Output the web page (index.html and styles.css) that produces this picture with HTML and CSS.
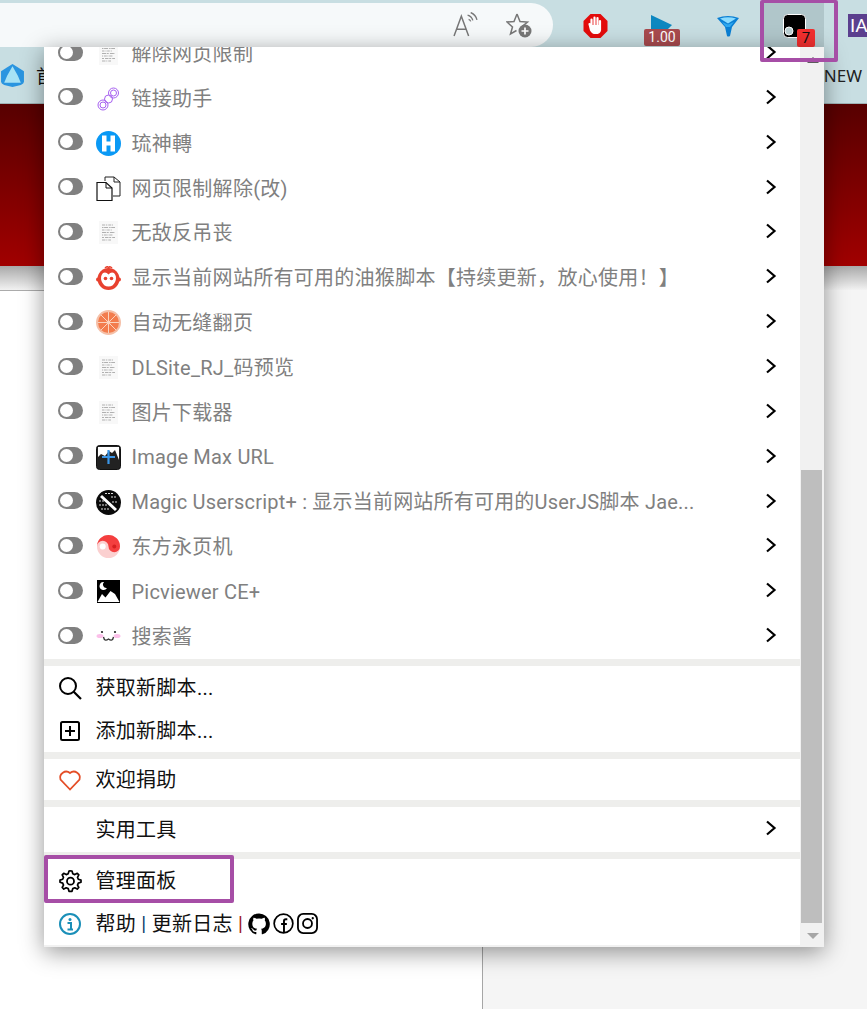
FILE: index.html
```html
<!DOCTYPE html>
<html lang="zh-CN">
<head>
<meta charset="utf-8">
<title>Tampermonkey menu</title>
<link rel="stylesheet" href="styles.css">
</head>
<body>
<svg class="defs" width="0" height="0" aria-hidden="true">
  <defs>
    <symbol id="chev" viewBox="0 0 12 16"><path d="M2 1.500 L9.500 8 L2 14.500" fill="none" stroke="#000" stroke-width="2.200"/></symbol>
    <symbol id="doc" viewBox="0 0 25 25">
      <rect x="3" y="1" width="19" height="23" fill="#f8f8f8"/>
      <g stroke="#b0b0b0" stroke-width="1.200" fill="none">
        <path d="M6 5h11" stroke-dasharray="3 .8 1.500 1"/>
        <path d="M6 7.500h13" stroke-dasharray="1.500 .6 4 1"/>
        <path d="M6 10h10" stroke-dasharray="2.500 1 1 .7"/>
        <path d="M6 12.500h13" stroke-dasharray="4 .7 2 1.200"/>
        <path d="M6 15h11" stroke-dasharray="1 .8 3 .6"/>
        <path d="M6 17.500h13" stroke-dasharray="2 1 3.500 .7"/>
        <path d="M6 20h9" stroke-dasharray="3.500 .8 1 1"/>
      </g>
    </symbol>
  </defs>
</svg>
<div class="page">
  <header class="toolbar">
    <div class="address">
      <svg class="tool-read" viewBox="0 0 24 24" width="25" height="25"><path d="M1 23 L8 4 L15 23 M3.500 16.500 H12.500" fill="none" stroke="#777" stroke-width="1.400"/><path d="M14 3 a7 7 0 0 1 5 5 M15 7 a3 3 0 0 1 2 2 M17 0.500 a10 10 0 0 1 6 7" fill="none" stroke="#777" stroke-width="1.300"/></svg>
      <svg class="tool-star" viewBox="0 0 26 26" width="26" height="26"><path d="M11 2 L14 9.500 L21.500 10 L15.500 15 L16.500 20 M11 2 L8 9.500 L1 10 L6.500 15 L4.500 22 L10.500 18.500" fill="none" stroke="#777" stroke-width="1.500"/><circle cx="19" cy="19" r="6.500" fill="#777"/><path d="M15.500 19 H22.500 M19 15.500 V22.500" stroke="#fff" stroke-width="1.700"/></svg>
    </div>
    <div class="exts">
      <div class="ext ext-stop">
        <svg viewBox="0 0 24 26" width="25" height="26"><path d="M7 1 H17 L24 8 V18 L17 25 H7 L0 18 V8 Z" fill="#e30b0b"/><path d="M7.500 17 L6 11 M8 14 V6.500 M11 13 V4.500 M14 13 V5 M16.500 14 V8 M7.500 13 H16.500 V17 Q16 20 12 20 Q9 20 7.500 17Z" stroke="#fff" stroke-width="2.200" fill="#fff" stroke-linecap="round"/></svg>
      </div>
      <div class="ext ext-speed">
        <svg viewBox="0 0 22 14" width="22" height="14"><path d="M0 0 L21 10 L17 14 H0 Z" fill="#0c87c0"/></svg>
        <span class="speed-badge">1.00</span>
      </div>
      <div class="ext ext-funnel">
        <svg viewBox="0 0 22 22" width="22" height="22"><path d="M0 3 Q11 -1 22 3 L15 12 L13 21 Q11 22 10 21 L8 12 Z" fill="#0a7fd4"/><path d="M3 3.500 Q11 1 19 3.500 L11 8.500 Z" fill="#8bdcff"/><path d="M5 7 L11 9.500 L17 7 L13 12 H9 Z" fill="#2ea8f0"/></svg>
      </div>
      <div class="ext ext-tm">
        <svg viewBox="0 0 24 24" width="24" height="24"><rect x=".5" y=".5" width="22" height="23" rx="4" fill="#000" stroke="#fff"/><circle cx="6" cy="17" r="4" fill="#bcd1d4" stroke="#fff" stroke-width="1"/></svg>
        <span class="tm-badge">7</span>
      </div>
      <div class="ext-ia">IA</div>
    </div>
  </header>
  <nav class="bookmarks">
    <svg viewBox="0 0 24 24" width="25" height="25"><path d="M12 1 L17 4 L23 8 V18 Q23 20 20 21 L12 23 L4 21 Q1 20 1 18 V8 L7 4 Z" fill="#2a95e0"/><path d="M12 3 L17 12 L20 19 H4 L7 12 Z" fill="#a6e2f5"/></svg>
    <span class="bm-first">首</span>
    <span class="bm-new">NEW</span>
  </nav>
  <div class="hero"></div>
  <div class="fade"></div>
  <main class="content">
    <div class="col-left"></div>
    <div class="col-right"></div>
  </main>

  <aside class="menu">
    <div class="menu-body">
      <div class="scripts">
        <ul class="script-list">
          <li class="script"><span class="toggle"></span><svg class="ico"><use href="#doc"/></svg><span class="name">解除网页限制</span><svg class="chev"><use href="#chev"/></svg></li>
          <li class="script"><span class="toggle"></span>
            <svg class="ico" viewBox="0 0 25 25"><g fill="none" stroke="#a761f0" stroke-width="1"><circle cx="17.500" cy="7" r="5"/><circle cx="17.500" cy="7" r="3"/><circle cx="12.500" cy="13" r="4"/><circle cx="7" cy="19" r="5"/><circle cx="7" cy="19" r="3"/></g></svg>
            <span class="name">链接助手</span><svg class="chev"><use href="#chev"/></svg></li>
          <li class="script"><span class="toggle"></span>
            <svg class="ico" viewBox="0 0 25 25"><circle cx="12.500" cy="12.500" r="12.500" fill="#0a99f5"/><path d="M6 4.500 H10.500 V10.500 H14.500 V4.500 H19 V20.500 H14.500 V14.500 H10.500 V20.500 H6 Z" fill="#fff"/></svg>
            <span class="name">琉神轉</span><svg class="chev"><use href="#chev"/></svg></li>
          <li class="script"><span class="toggle"></span>
            <svg class="ico" viewBox="0 0 25 25"><path d="M9 5 V1 H18 L24 6 V20 H17" fill="#fff" stroke="#222" stroke-width="1"/><path d="M18 1 V6 H24" fill="none" stroke="#222"/><path d="M1 6.500 H10 L16 12 V24.500 H1 Z" fill="#fff" stroke="#111" stroke-width="1.200"/><path d="M10 6.500 V12 H16" fill="none" stroke="#111"/></svg>
            <span class="name">网页限制解除(改)</span><svg class="chev"><use href="#chev"/></svg></li>
          <li class="script"><span class="toggle"></span><svg class="ico"><use href="#doc"/></svg><span class="name">无敌反吊丧</span><svg class="chev"><use href="#chev"/></svg></li>
          <li class="script"><span class="toggle"></span>
            <svg class="ico" viewBox="0 0 25 25"><path d="M9 3 Q12.500 0 12.500 4 Q13 0 16 3" fill="none" stroke="#e8412f" stroke-width="1.600"/><circle cx="2" cy="14.500" r="2" fill="#e8412f"/><circle cx="23" cy="14.500" r="2" fill="#e8412f"/><circle cx="12.500" cy="14" r="11" fill="#e8412f"/><path d="M12.500 9.500 Q15 6.500 18 8 Q21 11 19.500 16 Q17.500 21.500 12.500 21.500 Q7.500 21.500 5.500 16 Q4 11 7 8 Q10 6.500 12.500 9.500Z" fill="#fff"/><circle cx="9.500" cy="13.500" r="1.800" fill="#e8412f"/><circle cx="15.500" cy="13.500" r="1.800" fill="#e8412f"/></svg>
            <span class="name">显示当前网站所有可用的油猴脚本【持续更新，放心使用！】</span><svg class="chev"><use href="#chev"/></svg></li>
          <li class="script"><span class="toggle"></span>
            <svg class="ico" viewBox="0 0 25 25"><circle cx="12.500" cy="12.500" r="12.500" fill="#f5c0a8"/><circle cx="12.500" cy="12.500" r="10.500" fill="#f37c4d"/><path d="M12.500 2 V23 M2 12.500 H23 M5 5 L20 20 M20 5 L5 20" stroke="#fbd3bd" stroke-width="1"/><circle cx="12.500" cy="12.500" r="2" fill="#fbd3bd"/></svg>
            <span class="name">自动无缝翻页</span><svg class="chev"><use href="#chev"/></svg></li>
          <li class="script"><span class="toggle"></span><svg class="ico"><use href="#doc"/></svg><span class="name">DLSite_RJ_码预览</span><svg class="chev"><use href="#chev"/></svg></li>
          <li class="script"><span class="toggle"></span><svg class="ico"><use href="#doc"/></svg><span class="name">图片下载器</span><svg class="chev"><use href="#chev"/></svg></li>
          <li class="script"><span class="toggle"></span>
            <svg class="ico" viewBox="0 0 25 25"><rect x=".500" y=".500" width="24" height="24" rx="3" fill="#222" stroke="#111"/><path d="M2 2 H23 V15 L19 5 L16 8 L13 6 L9 11 L5 9 L2 12 Z" fill="#fff"/><path d="M12.500 5 V19 M6 12 H19" stroke="#3a96e8" stroke-width="2.200"/></svg>
            <span class="name name-latin">Image Max URL</span><svg class="chev"><use href="#chev"/></svg></li>
          <li class="script"><span class="toggle"></span>
            <svg class="ico" viewBox="0 0 25 25"><circle cx="12.500" cy="12.500" r="12.500" fill="#0a0a0a"/><path d="M5 6 L20 20" stroke="#fff" stroke-width="3"/><path d="M9 3.500 H18 M15 7 H21 M3 11 H8 M16 12 H22 M3 15 H11 M5 19 H14" stroke="#ddd" stroke-width="1.200" stroke-dasharray="2 1"/></svg>
            <span class="name name-mixed">Magic Userscript+ : 显示当前网站所有可用的UserJS脚本 Jae...</span><svg class="chev"><use href="#chev"/></svg></li>
          <li class="script"><span class="toggle"></span>
            <svg class="ico" viewBox="0 0 25 25"><circle cx="12.500" cy="12.500" r="11.500" fill="#fbd0d0"/><path d="M1 12.500 A11.500 11.500 0 0 1 24 12.500 A5.750 5.750 0 0 1 12.500 12.500 A5.750 5.750 0 0 0 1 12.500 Z" fill="#f43f3f"/><circle cx="6.700" cy="12.500" r="3" fill="#fff"/><circle cx="18.300" cy="12.500" r="2" fill="#d62020"/></svg>
            <span class="name">东方永页机</span><svg class="chev"><use href="#chev"/></svg></li>
          <li class="script"><span class="toggle"></span>
            <svg class="ico" viewBox="0 0 25 25"><rect x="1" y="1" width="23" height="23" fill="#000"/><path d="M8 3 A4 4 0 1 0 11 9 A3.500 3.500 0 0 1 8 3Z" fill="#fff"/><path d="M1.500 23 L6 15 L9.500 18.500 L14.500 12 L19 15 L23.500 23 Z" fill="#fff"/></svg>
            <span class="name name-latin">Picviewer CE+</span><svg class="chev"><use href="#chev"/></svg></li>
          <li class="script"><span class="toggle"></span>
            <svg class="ico" viewBox="0 0 25 25"><ellipse cx="4" cy="12" rx="3.500" ry="2" fill="#fbbfe9"/><ellipse cx="21" cy="12" rx="3.500" ry="2" fill="#fbbfe9"/><circle cx="6" cy="8" r="1.100" fill="#222"/><circle cx="19" cy="8" r="1.100" fill="#222"/><path d="M7.500 13 Q8.500 18 12.500 15 Q16.500 18 17.500 13" fill="none" stroke="#333" stroke-width="1.300"/></svg>
            <span class="name">搜索酱</span><svg class="chev"><use href="#chev"/></svg></li>
        </ul>
        <div class="sep"></div>
        <div class="action"><svg class="act-ico" viewBox="0 0 24 24"><circle cx="10" cy="10" r="8" fill="none" stroke="#000" stroke-width="2"/><path d="M15.500 15.500 L23 23" stroke="#000" stroke-width="2.200"/></svg><span class="label">获取新脚本...</span></div>
        <div class="action"><svg class="act-ico" viewBox="0 0 24 24"><rect x="3" y="3" width="18" height="18" rx="1.500" fill="none" stroke="#000" stroke-width="2"/><path d="M7 12 H17 M12 7 V17" stroke="#000" stroke-width="2"/></svg><span class="label">添加新脚本...</span></div>
        <div class="sep"></div>
        <div class="action action-donate"><svg class="act-ico" viewBox="0 0 24 24"><path d="M12 21.500 L2.500 11.500 A6 6 0 0 1 12 5 A6 6 0 0 1 21.500 11.500 Z" fill="none" stroke="#e44d26" stroke-width="1.800"/></svg><span class="label">欢迎捐助</span></div>
        <div class="sep"></div>
        <div class="action action-tools"><span class="act-ico"></span><span class="label grow">实用工具</span><svg class="chev"><use href="#chev"/></svg></div>
        <div class="sep"></div>
        <div class="action"><svg class="act-ico" viewBox="0 0 24 24"><path d="M12 2.500 L14 2.700 L14.800 5.400 L16.800 6.300 L19.300 5 L20.800 6.600 L19.500 9 L20.300 11 L23 11.800 V14 L20.300 14.800 L19.500 16.800 L20.800 19.200 L19.200 20.800 L16.800 19.500 L14.800 20.300 L14 23 H11 L10.200 20.300 L8.200 19.500 L5.800 20.800 L4.200 19.200 L5.500 16.800 L4.700 14.800 L2 14 V11.800 L4.700 11 L5.500 9 L4.200 6.600 L5.700 5 L8.200 6.300 L10.200 5.400 L11 2.700 Z" transform="translate(0 -.7)" fill="none" stroke="#000" stroke-width="1.700" stroke-linejoin="round"/><circle cx="12.500" cy="12.200" r="3.500" fill="none" stroke="#000" stroke-width="1.800"/></svg><span class="label">管理面板</span></div>
        <div class="action"><svg class="act-ico" viewBox="0 0 24 24"><circle cx="12" cy="12" r="10" fill="none" stroke="#1a8fb8" stroke-width="2"/><circle cx="12" cy="7.500" r="1.500" fill="#1a8fb8"/><path d="M9.500 11 H13 V17 M9.500 17.500 H15" fill="none" stroke="#1a8fb8" stroke-width="2"/></svg>
          <span class="label links">帮助 <i class="pipe-blue">|</i> 更新日志 <i class="pipe-red">|</i></span>
          <span class="socials">
            <svg viewBox="0 0 24 24" width="22" height="22"><path d="M12 .5a11.700 11.700 0 0 0-3.700 22.800c.6.100.8-.3.800-.6v-2c-3.300.700-4-1.600-4-1.600-.500-1.400-1.300-1.800-1.300-1.800-1.100-.7.100-.7.100-.7 1.200.100 1.800 1.200 1.800 1.200 1.100 1.800 2.800 1.300 3.500 1 .1-.8.400-1.300.8-1.600-2.600-.3-5.300-1.300-5.300-5.800 0-1.300.5-2.300 1.200-3.100-.1-.3-.5-1.500.1-3.100 0 0 1-.3 3.200 1.200a11 11 0 0 1 5.800 0c2.200-1.500 3.200-1.200 3.200-1.200.6 1.600.2 2.800.1 3.100.8.800 1.200 1.900 1.200 3.100 0 4.500-2.700 5.500-5.300 5.800.4.400.8 1.100.8 2.200v3.300c0 .3.200.7.800.6A11.700 11.700 0 0 0 12 .5z" fill="#000"/></svg>
            <svg viewBox="0 0 22 22" width="21" height="21"><circle cx="11" cy="11" r="9.800" fill="none" stroke="#000" stroke-width="1.800"/><path d="M15 6.500 H13.500 Q11.500 6.500 11.500 8.500 V20 M8.500 11.500 H14.500" fill="none" stroke="#000" stroke-width="2"/></svg>
            <svg viewBox="0 0 22 22" width="21" height="21"><rect x="1" y="1" width="20" height="20" rx="5.500" fill="none" stroke="#000" stroke-width="1.900"/><circle cx="11" cy="11" r="4.700" fill="none" stroke="#000" stroke-width="1.900"/><circle cx="16.500" cy="5.500" r="1.200" fill="#000"/></svg>
          </span>
        </div>
      </div>
      <div class="scrollbar">
        <span class="arrow-up"></span>
        <span class="thumb"></span>
        <span class="arrow-down"></span>
      </div>
    </div>
  </aside>
  <div class="mark mark-ext"></div>
  <div class="mark mark-panel"></div>
</div>
</body>
</html>
```
FILE: styles.css
```css
* { box-sizing: border-box; }
html, body { margin: 0; padding: 0; }
body {
  width: 867px;
  height: 1009px;
  overflow: hidden;
  background: #fff;
  font-family: Roboto, "Noto Sans CJK SC", sans-serif;
}
.defs { position: absolute; }
.page { position: relative; width: 867px; height: 1009px; overflow: hidden; display: flex; flex-direction: column; }

.toolbar { height: 47px; background: #c8dee2; display: flex; padding-top: 3px; flex: none; }
.address {
  width: 554px; height: 44px;
  background: #f6f9fa;
  border-radius: 0 22px 22px 0;
  display: flex; justify-content: flex-end; align-items: center;
  gap: 28px; padding: 0 21px 0 0;
}
.tool-read { margin-top: -1px; }
.tool-star { margin-top: -1px; }
.exts { flex: 1; display: flex; align-items: flex-start; position: relative; }
.ext { position: relative; display: flex; justify-content: center; }
.ext-stop { width: 25px; margin: 10px 0 0 30px; }
.ext-speed { width: 36px; margin: 12px 0 0 36px; }
.speed-badge {
  position: absolute; top: 14px; left: 0;
  width: 36px; height: 17px;
  background: #a84a4e; border-radius: 2px;
  color: #fff; font-size: 14px; line-height: 17px; text-align: center;
}
.ext-funnel { width: 22px; margin: 12px 0 0 37px; }
.ext-tm { width: 60px; height: 44px; margin-left: 25px; background: #b0c6ca; padding: 11px 0 0 19px; justify-content: flex-start; }
.tm-badge {
  position: absolute; top: 26px; left: 33px;
  width: 18px; height: 18px;
  background: #f22f2f; border-radius: 2px;
  color: #111; font-size: 15px; line-height: 18px; text-align: center;
}
.ext-ia {
  width: 19px; height: 23px; margin: 11px 0 0 24px;
  background: #5b3f8e; color: #fff; font-size: 19px; line-height: 23px; padding-left: 2px;
  overflow: hidden;
}

.bookmarks {
  height: 57px; flex: none;
  background: #c8dee2;
  display: flex; align-items: center;
  border-bottom: 1px solid #9fb3b6;
  font-size: 18px; color: #111;
}
.bm-first { margin-left: 11px; }
.bm-new { margin-left: auto; margin-right: 5px; font-family: "Noto Sans", sans-serif; font-size: 17px; color: #222; }

.hero { height: 162px; flex: none; background: linear-gradient(#570000, #a10000); }
.fade { height: 24px; flex: none; background: linear-gradient(#a9a9a9, #f2f2f2); }
.content { flex: 1; display: flex; min-height: 0; }
.col-left { width: 483px; background: #fff; border-top: 1px solid #ababab; border-right: 1px solid #a6a6a6; }
.col-right { flex: 1; background: #f5f5f5; }

.menu {
  position: absolute; left: 44px; top: 47px;
  width: 780px; height: 900px;
  background: #f1f1f1;
  box-shadow: 0 5px 22px rgba(0,0,0,.42);
  overflow: hidden;
}
.menu-body { display: flex; height: 100%; }
.scripts { width: 756px; height: 898px; background: #fff; overflow: hidden; }
.script-list { list-style: none; margin: -15.9px 0 0; padding: 0; }
.script {
  height: 44.86px;
  display: flex; align-items: center;
  padding: 0 23px 0 14px;
  font-size: 20px; letter-spacing: .28px;
  color: #808080;
}
.toggle {
  position: relative; flex: none;
  width: 25px; height: 17px;
  margin: -3px 13px 0 0;
  border-radius: 9px;
  background: #808080;
}
.toggle::after {
  content: ""; position: absolute; left: 2px; top: 2px;
  width: 13px; height: 13px; border-radius: 50%;
  background: #fff;
}
.ico { width: 25px; height: 25px; flex: none; margin-right: 10.500px; }
.name { flex: 1; min-width: 0; white-space: nowrap; margin-top: -2px; }
.name-latin { margin-top: 0; letter-spacing: .2px; }
.name-mixed { margin-top: -3px; letter-spacing: .2px; }
.chev { width: 12px; height: 16px; flex: none; margin-top: -3px; }
.sep { height: 7px; background: #eeeeec; }
.action {
  height: 43px;
  display: flex; align-items: center;
  padding: 0 23px 0 14px;
  font-size: 20px; color: #111;
  letter-spacing: .28px;
}
.action-donate { height: 41px; }
.action-tools { height: 45px; }
.act-ico { width: 24px; height: 24px; flex: none; margin-right: 13.500px; }
.label { margin-top: -2px; }
.grow { flex: 1; }
.links { white-space: pre; }
.links i { font-style: normal; }
.pipe-blue { color: #0b3c6e; }
.pipe-red { color: #9c1c1c; }
.socials { display: flex; align-items: center; gap: 3px; margin-left: 5px; }

.scrollbar { width: 24px; height: 100%; background: #f1f1f1; display: flex; flex-direction: column; padding-left: 1px; }
.arrow-up {
  width: 0; height: 0; margin: 10px 0 0 5.500px;
  border-left: 6px solid transparent; border-right: 6px solid transparent;
  border-bottom: 6px solid #5c5c5c;
}
.thumb { width: 21px; height: 453px; margin-top: 407px; background: #bebebe; }
.arrow-down {
  width: 0; height: 0; margin: 10px 0 0 5.500px;
  border-left: 6px solid transparent; border-right: 6px solid transparent;
  border-top: 6px solid #a6a6a6;
}

.mark { position: absolute; border: 4px solid #a64ea6; border-radius: 2px; }
.mark-ext { left: 760px; top: 0; width: 78px; height: 62px; border-top-width: 3px; }
.mark-panel { left: 44px; top: 855px; width: 190px; height: 48px; }
```
